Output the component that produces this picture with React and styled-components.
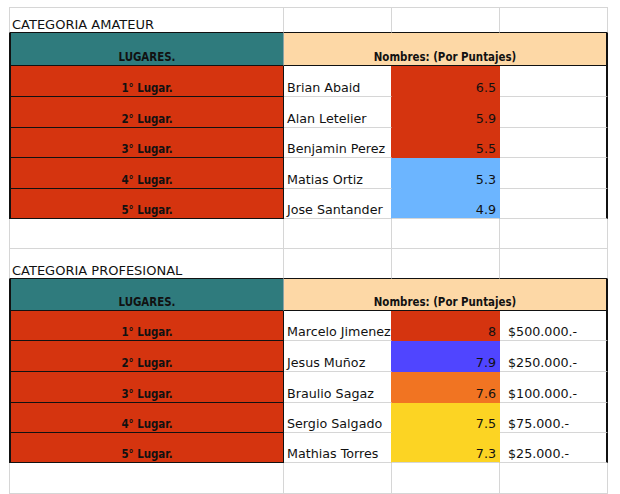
import React from "react";
import styled, { createGlobalStyle } from "styled-components";

const GRID = "#d6d6d6";
const INK = "#111";
const RED = "#d5340f";
const TEAL = "#2f7b7d";
const PEACH = "#fdd8a6";

const GlobalStyle = createGlobalStyle`
  html, body {
    margin: 0;
    padding: 0;
    background: #fff;
  }
  body {
    font-family: "DejaVu Sans", Verdana, sans-serif;
    color: ${INK};
  }
`;

const amateur = [
  { place: "1° Lugar.", name: "Brian Abaid", score: "6.5", fill: RED },
  { place: "2° Lugar.", name: "Alan Letelier", score: "5.9", fill: RED },
  { place: "3° Lugar.", name: "Benjamin Perez", score: "5.5", fill: RED },
  { place: "4° Lugar.", name: "Matias Ortiz", score: "5.3", fill: "#6cb5ff" },
  { place: "5° Lugar.", name: "Jose Santander", score: "4.9", fill: "#6cb5ff" },
];

const profesional = [
  { place: "1° Lugar.", name: "Marcelo Jimenez", score: "8", fill: RED, prize: "$500.000.-" },
  { place: "2° Lugar.", name: "Jesus Muñoz", score: "7.9", fill: "#5045ff", prize: "$250.000.-" },
  { place: "3° Lugar.", name: "Braulio Sagaz", score: "7.6", fill: "#f17422", prize: "$100.000.-" },
  { place: "4° Lugar.", name: "Sergio Salgado", score: "7.5", fill: "#fcd423", prize: "$75.000.-" },
  { place: "5° Lugar.", name: "Mathias Torres", score: "7.3", fill: "#fcd423", prize: "$25.000.-" },
];

const Sheet = styled.div`
  padding: 7px 0 0 9px;
`;

const Row = styled.div`
  display: grid;
  grid-template-columns: 275px 108px 108px 108px;
  height: ${p => p.$h}px;
`;

const Cell = styled.div`
  box-sizing: border-box;
  display: flex;
  align-items: flex-end;
  min-width: 0;
  overflow: hidden;
  white-space: nowrap;
  font-size: 12.7px;
  line-height: 15px;
  background: #fff;
  border-right: 1px solid ${GRID};
  border-bottom: 1px solid ${GRID};
  padding: 0 3px 1px;
`;

const BlankCell = styled(Cell)`
  border-top: ${p => (p.$top ? `1px solid ${GRID}` : "none")};
  border-left: ${p => (p.$first ? `1px solid ${GRID}` : "none")};
`;

const TitleCell = styled(BlankCell)`
  font-size: 13px;
  border-bottom-color: ${INK};
  padding-left: 2px;
  padding-bottom: 0;
`;

const HeadCell = styled(Cell)`
  justify-content: center;
  font-family: "DejaVu Sans Condensed", "DejaVu Sans", sans-serif;
  font-weight: bold;
  font-size: 11.4px;
  background: ${p => p.$bg};
  border-bottom-color: ${INK};
  border-left: ${p => (p.$first ? `2px solid ${INK}` : "none")};
  border-right: ${p => (p.$first ? "1px solid #8aa3a3" : `2px solid ${INK}`)};
  grid-column: ${p => (p.$span ? `span ${p.$span}` : "auto")};
  padding-bottom: 0;
`;

const PlaceCell = styled(Cell)`
  justify-content: center;
  font-family: "DejaVu Sans Condensed", "DejaVu Sans", sans-serif;
  font-weight: bold;
  font-size: 11.4px;
  background: ${RED};
  border-left: 2px solid ${INK};
  border-right-color: ${INK};
  border-bottom-color: ${INK};
  padding-bottom: 0;
`;

const NameCell = styled(Cell)`
  border-right-color: ${p => p.$edge};
`;

const ScoreCell = styled(Cell)`
  justify-content: flex-end;
  background: ${p => p.$fill};
  border-right-color: ${p => p.$fill};
  border-bottom-color: ${p => (p.$last ? GRID : p.$fill)};
`;

const PrizeCell = styled(Cell)`
  border-right: 2px solid ${INK};
  padding-left: 8px;
`;

const BlankRow = ({ h, top }) => (
  <Row $h={h}>
    <BlankCell $first $top={top} />
    <BlankCell $top={top} />
    <BlankCell $top={top} />
    <BlankCell $top={top} />
  </Row>
);

const Category = ({ title, rows, heights, top }) => (
  <>
    <Row $h={heights.title}>
      <TitleCell $first $top={top}>{title}</TitleCell>
      <TitleCell $top={top} />
      <TitleCell $top={top} />
      <TitleCell $top={top} />
    </Row>
    <Row $h={heights.head}>
      <HeadCell $first $bg={TEAL}>LUGARES.</HeadCell>
      <HeadCell $bg={PEACH} $span={3}>Nombres: (Por Puntajes)</HeadCell>
    </Row>
    {rows.map((r, i) => (
      <Row key={r.place} $h={heights.rows[i]}>
        <PlaceCell>{r.place}</PlaceCell>
        <NameCell $edge={r.fill}>{r.name}</NameCell>
        <ScoreCell $fill={r.fill} $last={i === rows.length - 1}>{r.score}</ScoreCell>
        <PrizeCell>{r.prize}</PrizeCell>
      </Row>
    ))}
  </>
);

export default function App() {
  return (
    <>
      <GlobalStyle />
      <Sheet>
        <Category
          title="CATEGORIA AMATEUR"
          rows={amateur}
          top
          heights={{ title: 26, head: 33, rows: [31, 31, 30, 31, 30] }}
        />
        <BlankRow h={30} />
        <Category
          title="CATEGORIA PROFESIONAL"
          rows={profesional}
          heights={{ title: 30, head: 32, rows: [30, 31, 31, 30, 30] }}
        />
        <BlankRow h={31} />
      </Sheet>
    </>
  );
}
